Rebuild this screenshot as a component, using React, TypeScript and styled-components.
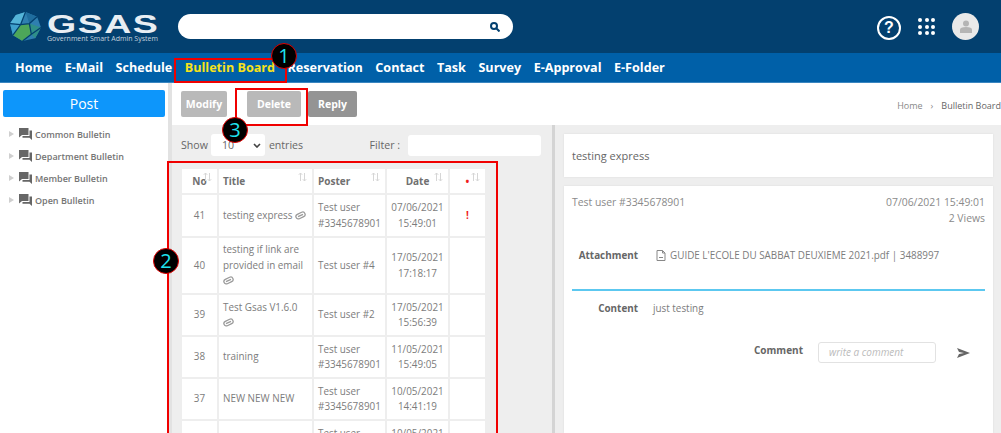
import styled, { createGlobalStyle } from 'styled-components'
import { FC } from 'react'

const GlobalStyle = createGlobalStyle`
    html, body {
        margin: 0;
        padding: 0;
        width: 1001px;
        height: 433px;
        overflow: hidden;
        background: #fff;
        font-family: 'Open Sans', sans-serif;
    }
    * {
        box-sizing: border-box;
    }
`

const Page = styled.div`
    position: relative;
    width: 1001px;
    height: 433px;
    overflow: hidden;
    display: flex;
    flex-direction: column;
`

const Header = styled.header`
    height: 53px;
    flex: none;
    background: #03406f;
    display: flex;
    align-items: center;
    padding: 0 22px 0 9px;
`

const Brand = styled.div`
    display: flex;
    align-items: center;
    gap: 5px;
    width: 169px;
`

const BrandText = styled.div`
    display: flex;
    flex-direction: column;
    color: #e8eef3;
    padding-top: 3px;
`

const BrandName = styled.span`
    font-family: 'Liberation Sans', sans-serif;
    font-size: 25px;
    font-weight: 700;
    line-height: 20px;
    letter-spacing: 1px;
    transform: scaleX(1.5);
    transform-origin: left;
`

const BrandSub = styled.span`
    font-size: 7px;
    line-height: 9px;
    white-space: nowrap;
    color: #c3d2de;
`

const Search = styled.div`
    width: 335px;
    height: 25px;
    border-radius: 13px;
    background: #fff;
    display: flex;
    align-items: center;
    justify-content: flex-end;
    padding-right: 13px;
`

const HeaderIcons = styled.div`
    margin-left: auto;
    display: flex;
    align-items: center;
`

const HelpIcon = styled.div`
    width: 24px;
    height: 24px;
    margin-top: 2px;
    border: 2.5px solid #fff;
    border-radius: 50%;
    color: #fff;
    font-family: 'Liberation Sans', sans-serif;
    font-weight: 700;
    font-size: 16px;
    line-height: 19px;
    text-align: center;
`

const Dots = styled.div`
    display: grid;
    grid-template-columns: repeat(3, 4px);
    gap: 2.5px;
    margin: 0 17px;
`

const Dot = styled.span`
    width: 4px;
    height: 4px;
    border-radius: 50%;
    background: #fff;
`

const Avatar = styled.div`
    width: 27px;
    height: 27px;
    border-radius: 50%;
    background: #e9e9e9;
    display: flex;
    align-items: center;
    justify-content: center;
`

const Nav = styled.nav`
    height: 30px;
    flex: none;
    background: #0060a8;
    border-bottom: 1px solid #3a86c0;
    display: flex;
    align-items: center;
    padding-left: 15px;
    gap: 12.5px;
`

const NavItem = styled.a<{ $active?: boolean }>`
    position: relative;
    font-size: 12.6px;
    font-weight: 700;
    line-height: 30px;
    white-space: nowrap;
    color: ${({ $active }) => ($active ? '#f7e21a' : '#fff')};

    ${({ $active }) =>
        $active &&
        `
        &::after {
            content: '';
            position: absolute;
            left: -3px;
            right: -4px;
            bottom: 0;
            height: 2px;
            background: #f7e21a;
        }
    `}
`

const Body = styled.div`
    flex: 1;
    min-height: 0;
    display: flex;
`

const Sidebar = styled.aside`
    width: 168px;
    flex: none;
    padding: 7px 3px 0 3px;
    background: #fff;
`

const PostButton = styled.div`
    height: 27px;
    background: #0d96fb;
    border-radius: 2px;
    color: #fff;
    font-size: 14px;
    line-height: 27px;
    text-align: center;
    margin-bottom: 6px;
`

const TreeItem = styled.div`
    height: 22px;
    display: flex;
    align-items: center;
    padding-left: 6px;
    font-size: 9px;
    font-weight: 600;
    color: #757575;
`

const TreeArrow = styled.span`
    width: 0;
    height: 0;
    border-left: 5px solid #cfcfcf;
    border-top: 3.5px solid transparent;
    border-bottom: 3.5px solid transparent;
    margin-right: 5px;
`

const TreeIcon = styled.svg`
    width: 13px;
    height: 12px;
    margin-right: 3px;
    fill: #666;
`

const Main = styled.main`
    flex: 1;
    min-width: 0;
    display: flex;
    flex-direction: column;
    border-left: 4px solid #e2e2e2;
`

const Toolbar = styled.div`
    height: 42px;
    flex: none;
    background: #fff;
    display: flex;
    align-items: flex-start;
    padding: 8px 0 0 9px;
    gap: 7px;
`

const ActionButton = styled.div<{ $tone: string; $w: number; $after?: number }>`
    height: 26px;
    width: ${({ $w }) => $w}px;
    margin-right: ${({ $after }) => $after ?? 0}px;
    border-radius: 2px;
    background: ${({ $tone }) => $tone};
    color: #fff;
    font-size: 10.5px;
    font-weight: 700;
    line-height: 26px;
    text-align: center;
`

const Crumbs = styled.div`
    margin-left: auto;
    padding-top: 8px;
    font-size: 9px;
    color: #888;
    white-space: nowrap;
    display: flex;
    gap: 8px;
`

const CrumbCurrent = styled.span`
    color: #666;
`

const Panels = styled.div`
    flex: 1;
    min-height: 0;
    display: flex;
    background: #eee;
`

const ListPanel = styled.section`
    width: 383px;
    flex: none;
    padding: 9px 11px 0 9px;
    border-right: 3px solid #d4d4d4;
`

const FilterRow = styled.div`
    display: flex;
    align-items: center;
    height: 22px;
    margin-bottom: 11px;
    font-size: 10.6px;
    color: #666;
`

const ShowSelect = styled.div`
    width: 54px;
    height: 22px;
    margin: 0 4px 0 3px;
    padding: 0 4px 0 11px;
    background: #fff;
    border-radius: 3px;
    display: flex;
    align-items: center;
    justify-content: space-between;
    line-height: 14px;
`

const FilterLabel = styled.span`
    margin-left: auto;
    margin-right: 8px;
`

const FilterInput = styled.div`
    width: 133px;
    height: 21px;
    background: #fff;
    border-radius: 3px;
`

const Table = styled.table`
    border-collapse: separate;
    border-spacing: 2px;
    table-layout: fixed;
    width: 307px;
    margin-left: -1px;
`

const HeadCell = styled.th<{ $w: number; $left?: boolean }>`
    position: relative;
    width: ${({ $w }) => $w}px;
    height: 24px;
    padding: 0 0 0 ${({ $left }) => ($left ? 4 : 0)}px;
    background: #fff;
    font-size: 10px;
    font-weight: 700;
    color: #707070;
    text-align: ${({ $left }) => ($left ? 'left' : 'center')};
`

const SortMark = styled.svg`
    position: absolute;
    right: 5px;
    top: 3px;
    width: 9px;
    height: 10px;
    fill: none;
    stroke: #d6d6d6;
    stroke-width: 1;
`

const Cell = styled.td<{ $left?: boolean; $h?: number }>`
    background: #fff;
    height: ${({ $h }) => $h ?? 40}px;
    padding: 0 0 0 ${({ $left }) => ($left ? 4 : 0)}px;
    font-size: 9.9px;
    line-height: 15.5px;
    color: #7c7c7c;
    text-align: ${({ $left }) => ($left ? 'left' : 'center')};
`

const Urgent = styled.span`
    color: #f01c1c;
    font-weight: 700;
`

const ClipIcon = styled.svg`
    width: 11px;
    height: 9px;
    vertical-align: -1px;
    fill: none;
    stroke: #999;
    stroke-width: 1.8;
`

const DetailPanel = styled.section`
    flex: 1;
    min-width: 0;
    padding: 9px 8px 0 9px;
    display: flex;
    flex-direction: column;
    gap: 9px;
`

const SubjectCard = styled.div`
    height: 43px;
    flex: none;
    background: #fff;
    box-shadow: 0 0 2px rgba(0, 0, 0, 0.08);
    padding-left: 8px;
    display: flex;
    align-items: center;
    font-size: 11px;
    color: #666;
`

const DetailCard = styled.div`
    flex: 1;
    background: #fff;
    box-shadow: 0 0 2px rgba(0, 0, 0, 0.08);
    padding: 8px 8px 0 8px;
`

const MetaRow = styled.div`
    display: flex;
    justify-content: space-between;
    font-size: 10.4px;
    line-height: 16px;
    color: #8a8a8a;
`

const MetaRight = styled.div`
    text-align: right;
`

const FieldRow = styled.div<{ $top: number }>`
    display: flex;
    align-items: center;
    height: 14px;
    margin-top: ${({ $top }) => $top}px;
    font-size: 9.9px;
    color: #7c7c7c;
`

const FieldLabel = styled.span`
    width: 66px;
    flex: none;
    text-align: right;
    font-weight: 700;
    color: #666;
    margin-right: 15px;
`

const FileIcon = styled.svg`
    width: 10px;
    height: 11px;
    margin: 0 4px 0 3px;
    fill: none;
    stroke: #888;
    stroke-width: 1;
`

const Divider = styled.div`
    height: 2px;
    margin-top: 27px;
    background: #5cc8f0;
`

const CommentRow = styled.div`
    display: flex;
    justify-content: flex-end;
    align-items: center;
    margin-top: 27px;
    padding-right: 15px;
`

const CommentLabel = styled.span`
    font-size: 10px;
    font-weight: 700;
    color: #666;
    margin: -6px 15px 0 0;
`

const CommentInput = styled.div`
    width: 118px;
    height: 21px;
    border: 1px solid #e2e2e2;
    border-radius: 3px;
    padding-left: 10px;
    font-size: 10px;
    font-style: italic;
    line-height: 19px;
    color: #bbb;
    margin-right: 21px;
`

const SendIcon = styled.svg`
    width: 13px;
    height: 10px;
    fill: #666;
`

const Callout = styled.div<{ $l: number; $t: number; $w: number; $h: number }>`
    position: absolute;
    left: ${({ $l }) => $l}px;
    top: ${({ $t }) => $t}px;
    width: ${({ $w }) => $w}px;
    height: ${({ $h }) => $h}px;
    border: 2px solid #f00000;
`

const Badge = styled.div<{ $l: number; $t: number }>`
    position: absolute;
    left: ${({ $l }) => $l}px;
    top: ${({ $t }) => $t}px;
    width: 26px;
    height: 26px;
    border-radius: 50%;
    background: #000;
    border: 1px solid #e00000;
    color: #1fe3ee;
    font-size: 20px;
    line-height: 24px;
    text-align: center;
`

const navItems = ['Home', 'E-Mail', 'Schedule', 'Bulletin Board', 'Reservation', 'Contact', 'Task', 'Survey', 'E-Approval', 'E-Folder']
const treeItems = ['Common Bulletin', 'Department Bulletin', 'Member Bulletin', 'Open Bulletin']

const Clip: FC = () => (
    <ClipIcon viewBox="0 0 16 13">
        <g transform="rotate(-25 8 6.5)">
            <rect x="1" y="3" width="14" height="7" rx="3.5" />
            <path d="M4 6.5h8" />
        </g>
    </ClipIcon>
)

const Sort: FC = () => (
    <SortMark viewBox="0 0 9 10">
        <path d="M2.5 9V1M.8 2.800 2.500 1l1.700 1.800M6.500 1v8M4.800 7.200 6.500 9l1.700-1.800" />
    </SortMark>
)

type Row = {
    no: number
    title: string
    clip?: 'inline' | 'below'
    poster: string[]
    date: string[]
    urgent?: boolean
    h: number
}

const rows: Row[] = [
    { no: 41, title: 'testing express', clip: 'inline', poster: ['Test user', '#3345678901'], date: ['07/06/2021', '15:49:01'], urgent: true, h: 41 },
    { no: 40, title: 'testing if link are provided in email', clip: 'below', poster: ['Test user #4'], date: ['17/05/2021', '17:18:17'], h: 55 },
    { no: 39, title: 'Test Gsas V1.6.0', clip: 'below', poster: ['Test user #2'], date: ['17/05/2021', '15:56:39'], h: 39 },
    { no: 38, title: 'training', poster: ['Test user', '#3345678901'], date: ['11/05/2021', '15:49:05'], h: 40 },
    { no: 37, title: 'NEW NEW NEW', poster: ['Test user', '#3345678901'], date: ['10/05/2021', '14:41:19'], h: 40 },
    { no: 36, title: '', poster: ['Test user', '#3345678901'], date: ['10/05/2021', '14:30:02'], h: 40 },
]

const App: FC = () => (
    <Page>
        <GlobalStyle />
        <Header>
            <Brand>
                <svg width="33" height="31" viewBox="0 0 34 32">
                    <polygon points="17,1 29,6 33,17 27,28 14,31 4,25 1,13 7,4" fill="#2f7fb0" />
                    <polygon points="17,1 29,6 21,13" fill="#1f6d9e" />
                    <polygon points="1,13 7,4 17,1 12,14" fill="#54b4d8" />
                    <polygon points="1,13 12,14 4,25" fill="#3fa0cc" />
                    <polygon points="12,14 21,13 23,24 14,31 4,25" fill="#4da65a" />
                    <polygon points="21,13 33,17 27,28 23,24" fill="#2f8f88" />
                    <path d="M17 1 12 14 4 25M1 13 12 14 21 13 29 6M21 13 23 24 14 31M23 24 33 17" stroke="#03406f" strokeWidth="1.3" fill="none" />
                </svg>
                <BrandText>
                    <BrandName>GSAS</BrandName>
                    <BrandSub>Government Smart Admin System</BrandSub>
                </BrandText>
            </Brand>
            <Search>
                <svg width="10" height="10" viewBox="0 0 10 10" fill="none" stroke="#03406f" strokeWidth="2">
                    <circle cx="4" cy="4" r="3" />
                    <path d="M6.5 6.500 9.500 9.500" />
                </svg>
            </Search>
            <HeaderIcons>
                <HelpIcon>?</HelpIcon>
                <Dots>
                    {Array.from({ length: 9 }).map((_, i) => (
                        <Dot key={i} />
                    ))}
                </Dots>
                <Avatar>
                    <svg width="12" height="13" viewBox="0 0 12 13" fill="#b5b5b5">
                        <circle cx="6" cy="3.5" r="3" />
                        <path d="M0 13V9.500C0 8 2 7 6 7s6 1 6 2.500V13z" />
                    </svg>
                </Avatar>
            </HeaderIcons>
        </Header>
        <Nav>
            {navItems.map((item) => (
                <NavItem key={item} $active={item === 'Bulletin Board'}>
                    {item}
                </NavItem>
            ))}
        </Nav>
        <Body>
            <Sidebar>
                <PostButton>Post</PostButton>
                {treeItems.map((item) => (
                    <TreeItem key={item}>
                        <TreeArrow />
                        <TreeIcon viewBox="0 0 13 12">
                            <path d="M0 0h9.500v7H3L0 9.500zM10.500 2.500H13V12l-2.500-2.200H3.500V8h7z" />
                        </TreeIcon>
                        {item}
                    </TreeItem>
                ))}
            </Sidebar>
            <Main>
                <Toolbar>
                    <ActionButton $tone="#b9b9b9" $w={46} $after={13}>Modify</ActionButton>
                    <ActionButton $tone="#b9b9b9" $w={54}>Delete</ActionButton>
                    <ActionButton $tone="#949494" $w={49}>Reply</ActionButton>
                    <Crumbs>
                        <span>Home</span>
                        <span>›</span>
                        <CrumbCurrent>Bulletin Board</CrumbCurrent>
                    </Crumbs>
                </Toolbar>
                <Panels>
                    <ListPanel>
                        <FilterRow>
                            Show
                            <ShowSelect>
                                10
                                <svg width="8" height="5" viewBox="0 0 8 5" fill="none" stroke="#444" strokeWidth="1.6">
                                    <path d="M1 1l3 3 3-3" />
                                </svg>
                            </ShowSelect>
                            entries
                            <FilterLabel>Filter :</FilterLabel>
                            <FilterInput />
                        </FilterRow>
                        <Table>
                            <thead>
                                <tr>
                                    <HeadCell $w={35}>No<Sort /></HeadCell>
                                    <HeadCell $w={93} $left>Title<Sort /></HeadCell>
                                    <HeadCell $w={71} $left>Poster<Sort /></HeadCell>
                                    <HeadCell $w={61}>Date<Sort /></HeadCell>
                                    <HeadCell $w={35}><Urgent>•</Urgent><Sort /></HeadCell>
                                </tr>
                            </thead>
                            <tbody>
                                {rows.map((row) => (
                                    <tr key={row.no}>
                                        <Cell $h={row.h}>{row.no}</Cell>
                                        <Cell $left>
                                            {row.title}
                                            {row.clip === 'inline' && <> <Clip /></>}
                                            {row.clip === 'below' && <><br /><Clip /></>}
                                        </Cell>
                                        <Cell $left>
                                            {row.poster.map((line) => (
                                                <div key={line}>{line}</div>
                                            ))}
                                        </Cell>
                                        <Cell>
                                            {row.date.map((line) => (
                                                <div key={line}>{line}</div>
                                            ))}
                                        </Cell>
                                        <Cell>{row.urgent && <Urgent>!</Urgent>}</Cell>
                                    </tr>
                                ))}
                            </tbody>
                        </Table>
                    </ListPanel>
                    <DetailPanel>
                        <SubjectCard>testing express</SubjectCard>
                        <DetailCard>
                            <MetaRow>
                                <span>Test user #3345678901</span>
                                <MetaRight>
                                    <div>07/06/2021 15:49:01</div>
                                    <div>2 Views</div>
                                </MetaRight>
                            </MetaRow>
                            <FieldRow $top={22}>
                                <FieldLabel>Attachment</FieldLabel>
                                <FileIcon viewBox="0 0 10 11">
                                    <path d="M1 .5h5.500L9 3v7.500H1zM6.500.5V3H9M3 7.500h4" />
                                </FileIcon>
                                GUIDE L'ECOLE DU SABBAT DEUXIEME 2021.pdf | 3488997
                            </FieldRow>
                            <Divider />
                            <FieldRow $top={10}>
                                <FieldLabel>Content</FieldLabel>
                                just testing
                            </FieldRow>
                            <CommentRow>
                                <CommentLabel>Comment</CommentLabel>
                                <CommentInput>write a comment</CommentInput>
                                <SendIcon viewBox="0 0 13 10">
                                    <path d="M0 0l13 5L0 10l2-4 5-1-5-1z" />
                                </SendIcon>
                            </CommentRow>
                        </DetailCard>
                    </DetailPanel>
                </Panels>
            </Main>
        </Body>
        <Callout $l={174} $t={58} $w={113} $h={25} />
        <Callout $l={235} $t={88} $w={73} $h={38} />
        <Callout $l={167} $t={161} $w={331} $h={290} />
        <Badge $l={271} $t={43}>1</Badge>
        <Badge $l={153} $t={248}>2</Badge>
        <Badge $l={222} $t={117}>3</Badge>
    </Page>
)

export default App
